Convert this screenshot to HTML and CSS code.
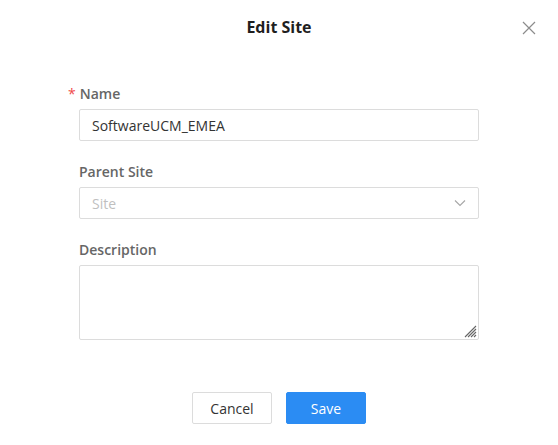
FILE: index.html
```html
<!DOCTYPE html>
<html lang="en">
<head>
    <meta charset="UTF-8">
    <meta name="viewport" content="width=device-width, initial-scale=1.0">
    <title>Edit Site</title>
    <link rel="stylesheet" href="styles.css">
</head>
<body>
    <div class="modal">
        <div class="modal-header">
            <h2 class="modal-title">Edit Site</h2>
            <button class="close" aria-label="Close">
                <svg width="14" height="14" viewBox="0 0 14 14">
                    <path d="M1 1L13 13M13 1L1 13" stroke="#8c8c8c" stroke-width="1.2" fill="none"/>
                </svg>
            </button>
        </div>
        <form class="form">
            <div class="field">
                <label class="label required">Name</label>
                <input class="input" type="text" value="SoftwareUCM_EMEA">
            </div>
            <div class="field">
                <label class="label">Parent Site</label>
                <div class="select">
                    <span class="placeholder">Site</span>
                    <svg class="arrow" width="12" height="8" viewBox="0 0 12 8">
                        <path d="M1 1.5L6 6.5L11 1.5" stroke="#a6a6a6" stroke-width="1.1" fill="none"/>
                    </svg>
                </div>
            </div>
            <div class="field">
                <label class="label">Description</label>
                <div class="textarea-wrap">
                    <textarea class="textarea"></textarea>
                    <!-- resize grip -->
                    <svg class="grip" width="13" height="13" viewBox="0 0 13 13">
                        <path d="M12 1L1 12M12 4L4 12M12 7L7 12M12 10L10 12" stroke="#666" stroke-width="1.1" fill="none"/>
                    </svg>
                </div>
            </div>
        </form>
        <div class="modal-footer">
            <button class="btn">Cancel</button>
            <button class="btn btn-primary">Save</button>
        </div>
    </div>
</body>
</html>
```
FILE: styles.css
```css
* {
    margin: 0;
    padding: 0;
    box-sizing: border-box;
}
body {
    background-color: white;
    font-family: "Open Sans", "Noto Sans", sans-serif;
    font-size: 14px;
    color: #333;
}
.modal {
    width: 558px;
    height: 445px;
    position: relative;
}
.modal-header {
    height: 54px;
    display: flex;
    justify-content: center;
    align-items: center;
}
.modal-title {
    font-size: 16px;
    font-weight: 700;
    color: #1f1f1f;
}
.close {
    position: absolute;
    top: 21px;
    right: 22px;
    border: none;
    background: none;
    cursor: pointer;
    display: flex;
}
.form {
    padding: 29px 0 0 79px;
    width: 479px;
}
.field {
    display: flex;
    flex-direction: column;
    margin-bottom: 20px;
}
.label {
    font-size: 14px;
    font-weight: 600;
    color: #666;
    line-height: 22px;
    margin-bottom: 4px;
}
.required::before {
    content: "*";
    color: #f04a4a;
    margin-left: -11px;
    margin-right: 4px;
    font-weight: 400;
}
.input,
.select,
.textarea {
    width: 400px;
    border: 1px solid #dcdcdc;
    border-radius: 2px;
    font-family: inherit;
    font-size: 14px;
    color: #333;
    background: white;
}
.input {
    height: 32px;
    padding: 0 12px;
    outline: none;
}
.select {
    height: 32px;
    padding: 0 12px;
    display: flex;
    align-items: center;
    justify-content: space-between;
}
.placeholder {
    color: #bfbfbf;
}
.textarea-wrap {
    position: relative;
    width: 400px;
    height: 75px;
}
.textarea {
    display: block;
    height: 75px;
    resize: none;
    padding: 4px 12px;
}
.grip {
    position: absolute;
    right: 2px;
    bottom: 2px;
}
.modal-footer {
    display: flex;
    justify-content: center;
    gap: 14px;
    margin-top: 52px;
}
.btn {
    width: 80px;
    height: 32px;
    border: 1px solid #dcdcdc;
    border-radius: 2px;
    background: white;
    font-family: inherit;
    font-size: 14px;
    color: #333;
    cursor: pointer;
}
.btn-primary {
    background-color: #2b8cf3;
    border-color: #2b8cf3;
    color: white;
}
```
